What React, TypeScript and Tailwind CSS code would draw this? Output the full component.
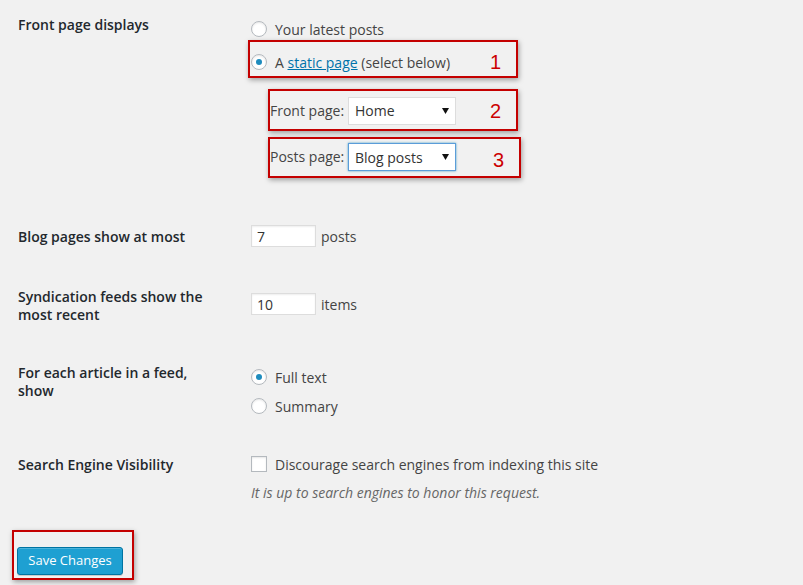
import type { ReactNode } from 'react'

const LABEL = 'w-[233px] pr-[33px] shrink-0 font-semibold text-[#23282d] leading-[18px]'
const ANNOT = 'border-2 border-[#c40000] shadow-[1px_2px_5px_rgba(0,0,0,0.35)]'
const DIGIT = "font-['Liberation_Sans',Arial,sans-serif] text-[20px] leading-[20px] text-[#cc0000]"

function Radio({ checked }: { checked?: boolean }) {
  return (
    <span className="w-4 h-4 rounded-full border border-[#b4b9be] bg-white shadow-[inset_0_1px_2px_rgba(0,0,0,0.1)] flex items-center justify-center shrink-0">
      {checked && <span className="w-[6px] h-[6px] rounded-full bg-[#1e8cbe]" />}
    </span>
  )
}

function Choice({ checked, children }: { checked?: boolean; children: ReactNode }) {
  return (
    <div className="h-[20px] flex items-center gap-[8px]">
      <Radio checked={checked} />
      <span>{children}</span>
    </div>
  )
}

function Select({ value, focused }: { value: string; focused?: boolean }) {
  return (
    <div
      className={
        focused
          ? 'w-[108px] h-[28px] bg-white border border-[#5b9dd9] shadow-[0_0_2px_rgba(30,140,190,0.8)] pl-[6px] pr-[6px] flex items-center justify-between text-[#333]'
          : 'w-[108px] h-[28px] bg-white border border-[#ddd] pl-[6px] pr-[6px] flex items-center justify-between text-[#333]'
      }
    >
      <span>{value}</span>
      <svg width="7" height="6" viewBox="0 0 7 6">
        <path d="M0 0h7L3.5 6z" fill="#111" />
      </svg>
    </div>
  )
}

function NumberBox({ value }: { value: string }) {
  return (
    <div className="w-[65px] h-[22px] bg-white border border-[#ddd] shadow-[inset_0_1px_2px_rgba(0,0,0,0.07)] pl-[5px] flex items-center text-[#333]">
      {value}
    </div>
  )
}

export default function App() {
  return (
    <div className="min-h-[585px] bg-[#f1f1f1] pl-[12px] font-['Open_Sans','DejaVu_Sans',sans-serif] text-[14px] text-[#444]">
      {/* Front page displays */}
      <div className="flex items-start pl-[6px]">
        <div className={`${LABEL} pt-[16px]`}>Front page displays</div>
        <div className="pt-[19px]">
          <Choice>Your latest posts</Choice>
          <div className={`${ANNOT} mt-[1px] -ml-[3px] w-[270px] h-[38px] pt-[10px] pl-[1px] pr-[15px]`}>
            <div className="h-[20px] flex items-center gap-[8px]">
              <Radio checked />
              <span>
                A <span className="text-[#0073aa] underline">static page</span> (select below)
              </span>
              <span className={`${DIGIT} ml-auto`}>1</span>
            </div>
          </div>
          <div className={`${ANNOT} mt-[11px] ml-[17px] w-[250px] h-[42px] pt-[1px] pr-[15px] flex items-center`}>
            <span className="w-[78px]">Front page:</span>
            <Select value="Home" />
            <span className={`${DIGIT} ml-auto`}>2</span>
          </div>
          <div className={`${ANNOT} mt-[6px] ml-[17px] w-[253px] h-[41px] pt-[4px] pr-[15px] flex items-start`}>
            <span className="w-[78px] pt-[3px]">Posts page:</span>
            <Select value="Blog posts" focused />
            <span className={`${DIGIT} ml-auto pt-[7px]`}>3</span>
          </div>
        </div>
      </div>

      {/* Blog pages */}
      <div className="flex items-start pl-[6px] mt-[37px]">
        <div className={`${LABEL} pt-[13px]`}>Blog pages show at most</div>
        <div className="pt-[10px] flex items-center gap-[5px]">
          <NumberBox value="7" />
          <span>posts</span>
        </div>
      </div>

      {/* Syndication */}
      <div className="flex items-start pl-[6px] mt-[33px]">
        <div className={`${LABEL} pt-[8px]`}>Syndication feeds show the most recent</div>
        <div className="pt-[13px] flex items-center gap-[5px]">
          <NumberBox value="10" />
          <span>items</span>
        </div>
      </div>

      {/* Feed article */}
      <div className="flex items-start pl-[6px] mt-[31px]">
        <div className={`${LABEL} pt-[9px]`}>For each article in a feed, show</div>
        <div className="pt-[12px] flex flex-col gap-[9px]">
          <Choice checked>Full text</Choice>
          <Choice>Summary</Choice>
        </div>
      </div>

      {/* Search engine */}
      <div className="flex items-start pl-[6px] mt-[30px]">
        <div className={`${LABEL} pt-[10px]`}>Search Engine Visibility</div>
        <div className="pt-[8px]">
          <div className="h-[20px] flex items-center gap-[8px]">
            <span className="w-4 h-4 border border-[#b4b9be] bg-white shadow-[inset_0_1px_2px_rgba(0,0,0,0.1)] shrink-0" />
            <span>Discourage search engines from indexing this site</span>
          </div>
          <p className="mt-[10px] leading-[18px] italic text-[#666]">It is up to search engines to honor this request.</p>
        </div>
      </div>

      {/* Save */}
      <div className={`${ANNOT} mt-[28px] w-[122px] h-[50px] pt-[15px] pl-[3px]`}>
        <button className="w-[106px] h-[28px] rounded-[3px] bg-[#1ea0d2] border border-[#0074a2] shadow-[inset_0_1px_0_rgba(120,200,230,0.5),0_1px_0_rgba(0,0,0,0.15)] text-white text-[13px] flex items-center justify-center">
          Save Changes
        </button>
      </div>
    </div>
  )
}
